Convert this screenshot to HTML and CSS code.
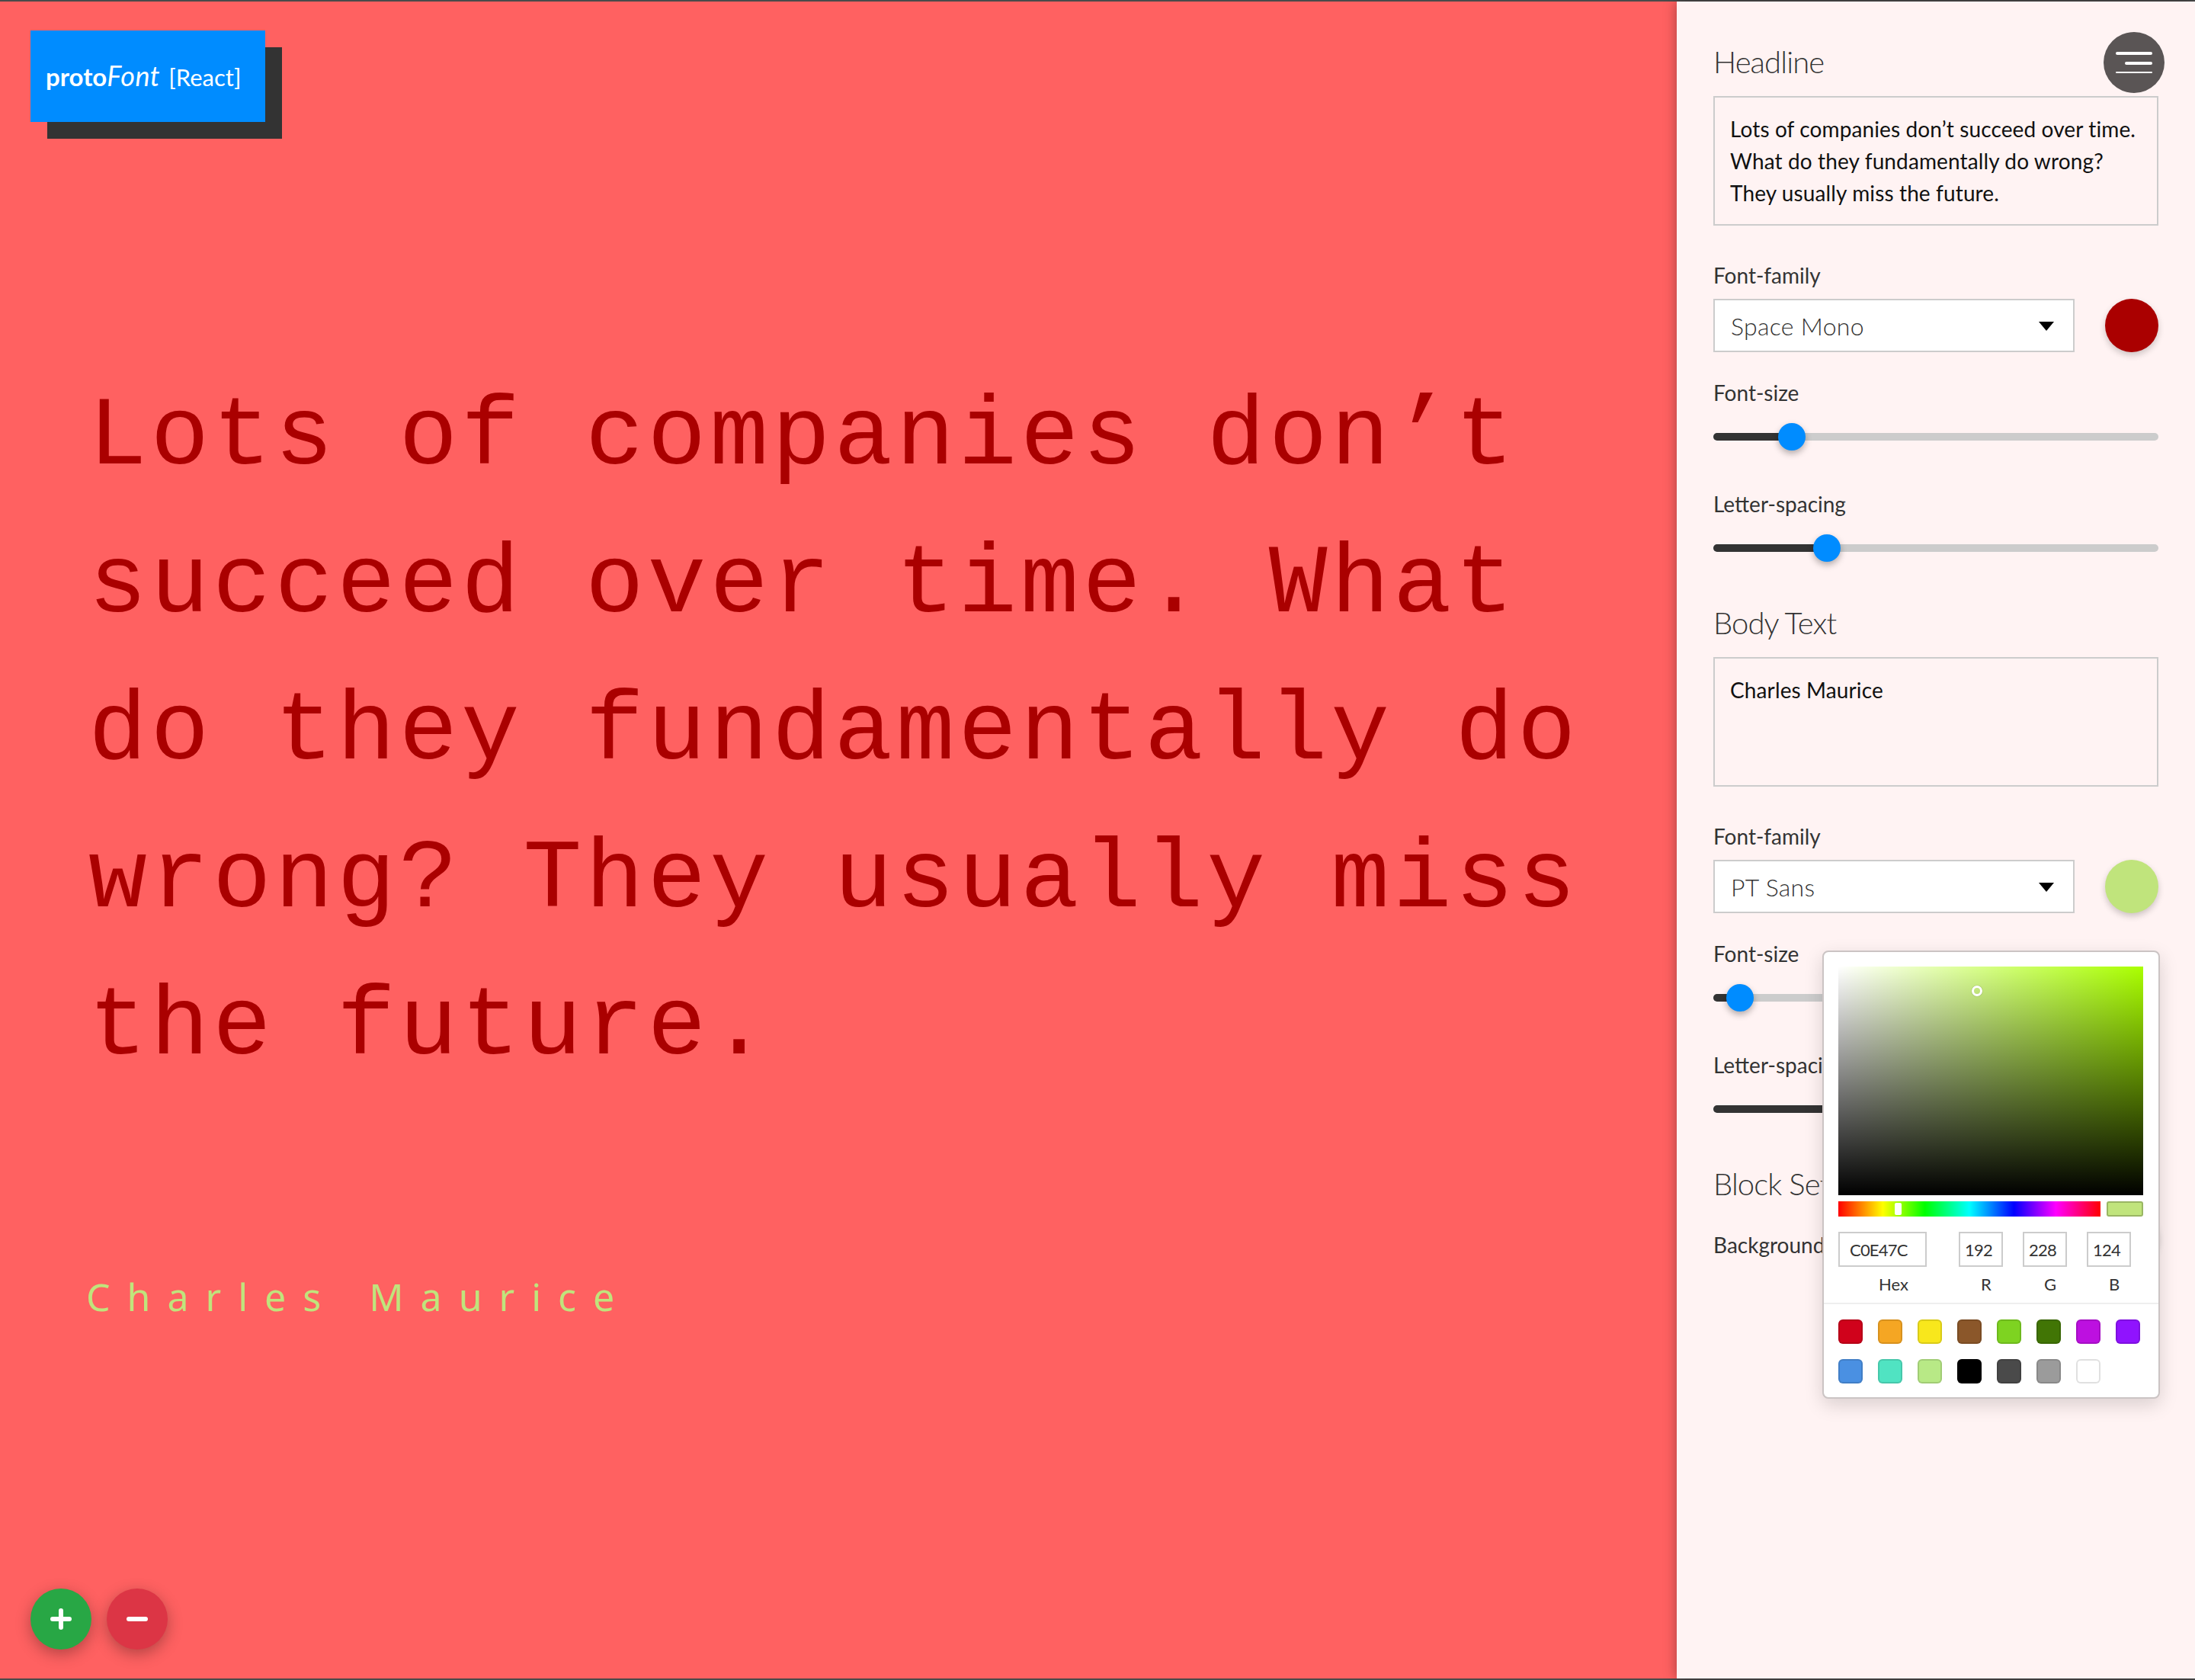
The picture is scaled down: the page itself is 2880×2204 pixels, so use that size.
FILE: index.html
```html
<!DOCTYPE html>
<html lang="en">
<head>
  <meta charset="UTF-8">
  <title>protoFont [React]</title>
  <link rel="stylesheet" href="styles.css">
</head>
<body>
  <div class="app">
    <main class="preview">
      <div class="logo"><b>proto</b><i>Font</i> <span>[React]</span></div>
      <h1 class="preview-headline">Lots of companies don’t succeed over time. What do they fundamentally do wrong? They usually miss the future.</h1>
      <p class="preview-body">Charles Maurice</p>
      <div class="zoom-buttons">
        <button class="round-btn round-btn-add" type="button">
          <svg viewBox="0 0 28 28" width="28" height="28"><path d="M3 14h22M14 3v22" stroke="#fff" stroke-width="6" stroke-linecap="round"/></svg>
        </button>
        <button class="round-btn round-btn-remove" type="button">
          <svg viewBox="0 0 28 28" width="28" height="28"><path d="M3 14h22" stroke="#fff" stroke-width="6" stroke-linecap="round"/></svg>
        </button>
      </div>
    </main>

    <aside class="panel">
      <button class="menu-btn" type="button">
        <span class="menu-line menu-line-top"></span>
        <span class="menu-line menu-line-mid"></span>
        <span class="menu-line menu-line-bottom"></span>
      </button>

      <h2 class="panel-title">Headline</h2>
      <div class="text-box">Lots of companies don’t succeed over time.<br>What do they fundamentally do wrong?<br>They usually miss the future.</div>

      <div class="field-label field-label-family">Font-family</div>
      <div class="font-row">
        <div class="select">Space Mono<span class="select-arrow"></span></div>
        <div class="color-dot color-dot-red"></div>
      </div>

      <div class="field-label field-label-size">Font-size</div>
      <div class="slider"><div class="slider-fill" style="width: 103px"></div><div class="slider-thumb" style="left: 85px"></div></div>

      <div class="field-label field-label-spacing">Letter-spacing</div>
      <div class="slider"><div class="slider-fill" style="width: 149px"></div><div class="slider-thumb" style="left: 131px"></div></div>

      <h2 class="panel-title panel-title-next">Body Text</h2>
      <div class="text-box">Charles Maurice</div>

      <div class="field-label field-label-family">Font-family</div>
      <div class="font-row">
        <div class="select">PT Sans<span class="select-arrow"></span></div>
        <div class="color-dot color-dot-green"></div>
      </div>

      <div class="field-label field-label-size">Font-size</div>
      <div class="slider"><div class="slider-fill" style="width: 35px"></div><div class="slider-thumb" style="left: 17px"></div></div>

      <div class="field-label field-label-spacing">Letter-spacing</div>
      <div class="slider"><div class="slider-fill" style="width: 260px"></div><div class="slider-thumb" style="left: 242px"></div></div>

      <h2 class="panel-title panel-title-next">Block Settings</h2>
      <div class="background-row">
        <div class="field-label">Background</div>
        <div class="color-dot color-dot-bg"></div>
      </div>

      <div class="picker">
        <div class="picker-saturation"><span class="picker-marker"></span></div>
        <div class="picker-hue-row">
          <div class="picker-hue"><span class="picker-hue-thumb"></span></div>
          <div class="picker-current"></div>
        </div>
        <div class="picker-inputs">
          <div class="picker-input picker-input-hex"><div class="picker-value">C0E47C</div><div class="picker-label">Hex</div></div>
          <div class="picker-input"><div class="picker-value">192</div><div class="picker-label">R</div></div>
          <div class="picker-input"><div class="picker-value">228</div><div class="picker-label">G</div></div>
          <div class="picker-input"><div class="picker-value">124</div><div class="picker-label">B</div></div>
        </div>
        <div class="picker-swatches">
          <span class="swatch" style="background: #d0021b"></span>
          <span class="swatch" style="background: #f5a623"></span>
          <span class="swatch" style="background: #f8e71c"></span>
          <span class="swatch" style="background: #8b572a"></span>
          <span class="swatch" style="background: #7ed321"></span>
          <span class="swatch" style="background: #417505"></span>
          <span class="swatch" style="background: #bd10e0"></span>
          <span class="swatch" style="background: #9013fe"></span>
          <span class="swatch" style="background: #4a90e2"></span>
          <span class="swatch" style="background: #50e3c2"></span>
          <span class="swatch" style="background: #b8e986"></span>
          <span class="swatch" style="background: #000000"></span>
          <span class="swatch" style="background: #4a4a4a"></span>
          <span class="swatch" style="background: #9b9b9b"></span>
          <span class="swatch" style="background: #ffffff"></span>
        </div>
      </div>
    </aside>
  </div>
</body>
</html>
```

FILE: styles.css
```css
* {
  margin: 0;
  padding: 0;
  box-sizing: border-box;
}

body {
  font-family: "Lato", "Open Sans", sans-serif;
  background-color: #4a4a4a;
  padding: 2px 0;
  height: 2204px;
  overflow: hidden;
}

.app {
  display: flex;
  height: 2200px;
}

/* left side */
.preview {
  position: relative;
  width: 2200px;
  background-color: #ff6161;
  padding: 475px 0 0 116px;
}

.logo {
  position: absolute;
  left: 40px;
  top: 38px;
  width: 308px;
  height: 120px;
  padding-left: 20px;
  background-color: #008cff;
  box-shadow: 22px 22px 0 #333;
  color: #fff;
  font-size: 32px;
  line-height: 118px;
  white-space: nowrap;
}

.logo b {
  font-size: 33px;
  font-weight: 700;
}

.logo i {
  font-size: 36px;
  font-weight: 400;
  letter-spacing: 0.5px;
  margin-right: 3px;
}

.logo span {
  font-size: 31px;
  font-weight: 400;
}

.preview-headline {
  width: 2040px;
  font-family: "Liberation Mono", monospace;
  font-weight: 400;
  font-size: 128px;
  line-height: 193.5px;
  letter-spacing: 4.7px;
  color: #aa0000;
}

.preview-body {
  margin: 221px 0 0 -3px;
  font-family: "Noto Sans", sans-serif;
  font-size: 50px;
  line-height: 70px;
  letter-spacing: 22px;
  word-spacing: 6px;
  color: #c0e47c;
}

.zoom-buttons {
  position: absolute;
  left: 40px;
  bottom: 38px;
  display: flex;
  gap: 20px;
}

.round-btn {
  display: flex;
  align-items: center;
  justify-content: center;
  width: 80px;
  height: 80px;
  border: none;
  border-radius: 50%;
  box-shadow: 0 6px 20px rgba(0, 0, 0, 0.3);
}

.round-btn-add {
  background-color: #28a745;
}

.round-btn-remove {
  background-color: #dc3545;
}

/* right side */
.panel {
  position: relative;
  z-index: 1;
  width: 680px;
  padding: 54px 48px 0;
  background-color: #fff3f3;
  box-shadow: 0 0 16px rgba(0, 0, 0, 0.35);
  color: #333;
}

.menu-btn {
  position: absolute;
  right: 40px;
  top: 40px;
  width: 80px;
  height: 80px;
  border: none;
  border-radius: 50%;
  background-color: #5a5555;
}

.menu-line {
  position: absolute;
  right: 16px;
  height: 4px;
  border-radius: 2px;
  background-color: #fff;
}

.menu-line-top {
  top: 26px;
  width: 48px;
}

.menu-line-mid {
  top: 39px;
  width: 36px;
}

.menu-line-bottom {
  top: 52px;
  width: 48px;
  height: 2px;
}

.panel-title {
  font-size: 40px;
  font-weight: 300;
  letter-spacing: -0.9px;
  line-height: 50px;
  margin-bottom: 20px;
}

.panel-title-next {
  margin-top: 68px;
}

.text-box {
  height: 170px;
  padding: 20px;
  border: 2px solid #ccc;
  font-size: 28px;
  font-weight: 400;
  letter-spacing: 0.12px;
  line-height: 42px;
  color: #111;
}

.field-label {
  font-size: 28px;
  font-weight: 400;
  line-height: 34px;
}

.field-label-family {
  margin: 48px 0 14px;
}

.field-label-size {
  margin: 36px 0 36px;
}

.field-label-spacing {
  margin: 66px 0 36px;
}

.font-row {
  display: flex;
  justify-content: space-between;
}

.select {
  position: relative;
  width: 474px;
  height: 70px;
  padding-left: 21px;
  border: 2px solid #ccc;
  background-color: #fff;
  font-size: 32px;
  font-weight: 300;
  letter-spacing: 0.3px;
  line-height: 68px;
  color: #333;
}

.select-arrow {
  position: absolute;
  right: 25px;
  top: 28px;
  border-left: 10px solid transparent;
  border-right: 10px solid transparent;
  border-top: 12px solid #000;
}

.color-dot {
  width: 70px;
  height: 70px;
  border-radius: 50%;
  box-shadow: 0 4px 8px rgba(0, 0, 0, 0.2);
}

.color-dot-red {
  background-color: #aa0000;
}

.color-dot-green {
  background-color: #c0e47c;
}

.color-dot-bg {
  background-color: #ff6161;
}

.slider {
  position: relative;
  height: 10px;
  border-radius: 5px;
  background-color: #ccc;
}

.slider-fill {
  height: 10px;
  border-radius: 5px;
  background-color: #333;
}

.slider-thumb {
  position: absolute;
  top: -13px;
  width: 36px;
  height: 36px;
  border-radius: 50%;
  background-color: #008cff;
  box-shadow: 0 4px 8px rgba(0, 0, 0, 0.3);
}

.background-row {
  display: flex;
  justify-content: space-between;
  margin-top: -10px;
}

.background-row .field-label {
  margin-top: 28px;
}

/* colour picker */
.picker {
  position: absolute;
  left: 191px;
  top: 1245px;
  width: 443px;
  height: 588px;
  padding: 19px 19px 0;
  border: 2px solid #cbc4c4;
  border-radius: 8px;
  background-color: #fff;
  box-shadow: 0 8px 24px rgba(0, 0, 0, 0.15);
  font-size: 22px;
  color: #333;
}

.picker-saturation {
  position: relative;
  width: 400px;
  height: 300px;
  background:
    linear-gradient(to top, #000, rgba(0, 0, 0, 0)),
    linear-gradient(to right, #fff, rgba(255, 255, 255, 0)),
    #aaff00;
}

.picker-marker {
  position: absolute;
  left: 175px;
  top: 25px;
  width: 14px;
  height: 14px;
  border: 3px solid #fff;
  border-radius: 50%;
  box-shadow: 0 0 1px rgba(0, 0, 0, 0.6);
}

.picker-hue-row {
  display: flex;
  justify-content: space-between;
  width: 400px;
  margin-top: 8px;
}

.picker-hue {
  position: relative;
  width: 344px;
  height: 20px;
  background: linear-gradient(to right, #f00 0%, #ff0 17%, #0f0 33%, #0ff 50%, #00f 67%, #f0f 83%, #f00 100%);
}

.picker-hue-thumb {
  position: absolute;
  left: 74px;
  top: 2px;
  width: 9px;
  height: 16px;
  border-radius: 2px;
  background-color: #fff;
}

.picker-current {
  width: 48px;
  height: 20px;
  border: 2px solid rgba(0, 0, 0, 0.2);
  border-radius: 3px;
  background-color: #c0e47c;
}

.picker-inputs {
  display: flex;
  margin-top: 20px;
  padding-bottom: 11px;
}

.picker-input {
  width: 58px;
  margin-left: 26px;
  text-align: center;
}

.picker-input-hex {
  width: 116px;
  margin-left: 0;
  margin-right: 16px;
}

.picker-value {
  height: 46px;
  padding: 0 6px;
  border: 2px solid #ccc;
  font-size: 22px;
  letter-spacing: -0.8px;
  line-height: 44px;
  text-align: left;
}

.picker-input-hex .picker-value {
  padding-left: 13px;
}

.picker-label {
  margin-top: 10px;
  padding-left: 14px;
  line-height: 26px;
}

.picker-input-hex .picker-label {
  padding-left: 29px;
}

.picker-swatches {
  display: grid;
  grid-template-columns: repeat(8, 32px);
  gap: 20px;
  margin: 0 -19px;
  padding: 20px 19px 0;
  border-top: 2px solid #eee;
}

.swatch {
  display: block;
  width: 32px;
  height: 32px;
  border-radius: 6px;
  box-shadow: inset 0 0 0 2px rgba(0, 0, 0, 0.12);
}
```
